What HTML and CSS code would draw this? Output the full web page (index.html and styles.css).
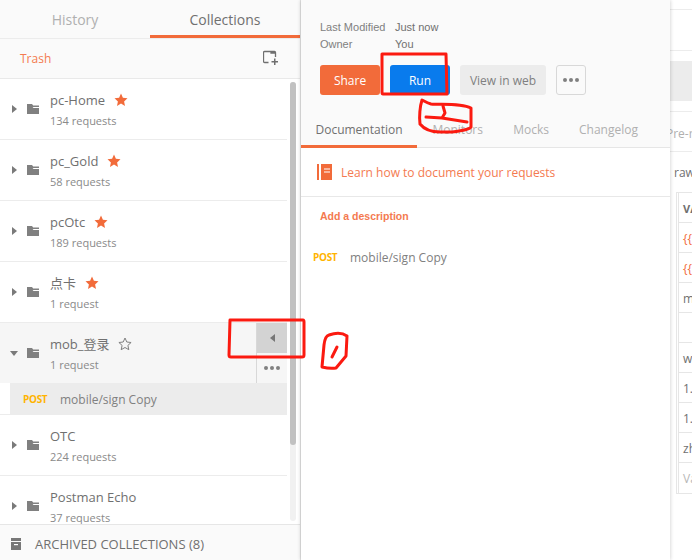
FILE: index.html
```html
<!DOCTYPE html>
<html lang="en">
<head>
<meta charset="utf-8">
<title>Postman</title>
<link rel="stylesheet" href="styles.css">
</head>
<body>
<svg class="defs" width="0" height="0" aria-hidden="true">
  <defs>
    <symbol id="star" viewBox="0 0 14 14"><path d="M7 .6l1.900 4.200 4.600.5-3.400 3.100.9 4.500L7 10.600l-4 2.300.9-4.500L.5 5.300l4.600-.5z"/></symbol>
    <symbol id="folder" viewBox="0 0 12 10"><path d="M0 0h5l1.200 1.500H12V3H6.500L5.600 4H12v6H0z"/></symbol>
  </defs>
</svg>
<div class="app">
  <aside class="sidebar">
    <nav class="side-tabs">
      <div class="side-tab">History</div>
      <div class="side-tab side-tab-on">Collections</div>
    </nav>
    <div class="trash-row">
      <span class="trash">Trash</span>
      <svg class="new-coll" width="16" height="16" viewBox="0 0 16 16"><path d="M5.500 12.500H1.500a1 1 0 0 1-1-1v-9a1 1 0 0 1 1-1h10a1 1 0 0 1 1 1V7M8 1v2h4.500" fill="none" stroke="#6f6f6f" stroke-width="1.300"/><path d="M11 8.500h1.500V11H15v1.500h-2.500V15H11v-2.500H8.500V11H11z" fill="#6f6f6f"/></svg>
    </div>
    <div class="list-wrap">
      <ul class="list">
        <li class="coll">
          <i class="caret"></i><svg class="folder"><use href="#folder"/></svg>
          <div class="coll-text"><div class="coll-name">pc-Home<svg class="star"><use href="#star"/></svg></div><div class="coll-count">134 requests</div></div>
        </li>
        <li class="coll">
          <i class="caret"></i><svg class="folder"><use href="#folder"/></svg>
          <div class="coll-text"><div class="coll-name">pc_Gold<svg class="star"><use href="#star"/></svg></div><div class="coll-count">58 requests</div></div>
        </li>
        <li class="coll">
          <i class="caret"></i><svg class="folder"><use href="#folder"/></svg>
          <div class="coll-text"><div class="coll-name">pcOtc<svg class="star"><use href="#star"/></svg></div><div class="coll-count">189 requests</div></div>
        </li>
        <li class="coll">
          <i class="caret"></i><svg class="folder"><use href="#folder"/></svg>
          <div class="coll-text"><div class="coll-name">点卡<svg class="star"><use href="#star"/></svg></div><div class="coll-count">1 request</div></div>
        </li>
        <li class="coll coll-open">
          <i class="caret caret-down"></i><svg class="folder"><use href="#folder"/></svg>
          <div class="coll-text"><div class="coll-name">mob_登录<svg class="star star-empty" viewBox="0 0 14 14"><path d="M7 1l1.800 4 4.300.5-3.200 2.900.9 4.300L7 10.500l-3.800 2.200.9-4.300L.9 5.500l4.300-.5z"/></svg></div><div class="coll-count">1 request</div></div>
          <div class="coll-actions">
            <div class="collapse-btn"><i class="caret-left"></i></div>
            <div class="more-btn"><b></b><b></b><b></b></div>
          </div>
        </li>
        <li class="req"><span class="post">POST</span><span class="req-name">mobile/sign Copy</span></li>
        <li class="coll">
          <i class="caret"></i><svg class="folder"><use href="#folder"/></svg>
          <div class="coll-text"><div class="coll-name">OTC</div><div class="coll-count">224 requests</div></div>
        </li>
        <li class="coll">
          <i class="caret"></i><svg class="folder"><use href="#folder"/></svg>
          <div class="coll-text"><div class="coll-name">Postman Echo</div><div class="coll-count">37 requests</div></div>
        </li>
      </ul>
      <div class="scroll-track"><div class="scroll-thumb"></div></div>
    </div>
    <footer class="archived">
      <svg width="12" height="12" viewBox="0 0 12 12"><path fill="#777" d="M1 0h10v3H1zM1 4h10v8H1z"/><path fill="#fff" d="M4 6h4v1.200H4z"/></svg>
      <span>ARCHIVED COLLECTIONS (8)</span>
    </footer>
  </aside>

  <main class="panel">
    <header class="panel-head">
      <div class="meta"><span class="meta-key">Last Modified</span><span class="meta-val">Just now</span></div>
      <div class="meta"><span class="meta-key">Owner</span><span class="meta-val">You</span></div>
      <div class="actions">
        <button class="btn btn-share">Share</button>
        <button class="btn btn-run">Run</button>
        <button class="btn btn-web">View in web</button>
        <button class="btn btn-more"><b></b><b></b><b></b></button>
      </div>
      <nav class="panel-tabs">
        <div class="panel-tab panel-tab-on">Documentation</div>
        <div class="panel-tab">Monitors</div>
        <div class="panel-tab">Mocks</div>
        <div class="panel-tab">Changelog</div>
      </nav>
    </header>
    <div class="learn">
      <svg width="15" height="16" viewBox="0 0 15 16"><path fill="#f26b3a" d="M0 0h2v16H0zM4 0h11v16H4z"/><path fill="#fff" d="M7 4.500h6v1H7zM7 7.500h6v1H7z"/></svg>
      <span>Learn how to document your requests</span>
    </div>
    <div class="add-desc">Add a description</div>
    <div class="doc-req"><span class="post">POST</span><span class="req-name">mobile/sign Copy</span></div>
  </main>

  <section class="behind">
    <div class="b-r1"></div>
    <div class="b-r2"></div>
    <div class="b-bar"></div>
    <div class="b-tab">Pre-r</div>
    <div class="b-raw">raw</div>
    <div class="b-table">
      <div class="b-cell b-head">VA</div>
      <div class="b-cell b-var">{{</div>
      <div class="b-cell b-var">{{</div>
      <div class="b-cell">m</div>
      <div class="b-cell"></div>
      <div class="b-cell">w</div>
      <div class="b-cell">1.</div>
      <div class="b-cell">1.</div>
      <div class="b-cell">zh</div>
      <div class="b-cell b-ph">Va</div>
    </div>
  </section>
</div>

<svg class="marks" width="692" height="560" viewBox="0 0 692 560" fill="none" stroke="#fb1a10" stroke-width="3" stroke-linejoin="round" stroke-linecap="round" aria-hidden="true">
  <path d="M230 320H303Q304 320 304 322V355Q304 357 302 357H231Q229 357 229 355Z"/>
  <path d="M382 54H446L447 94H383Q382 94 382 92Z"/>
  <path d="M422 100C420 106 419 117 420 124C424 129 432 132 440 132H452C460 131 470 129 471 127L471 108C460 103 440 105 431 104C427 103 424 101 422 100Z"/>
  <path d="M426 117L442 118L445 113L443 106M442 118L467 122"/>
  <path d="M329 335Q325 336 324 345L322 367Q330 369 336 368L346 356L347 336Q340 331 329 335Z"/>
  <path d="M337 347L332 357"/>
</svg>
</body>
</html>
```

FILE: styles.css
```css
* { box-sizing: border-box; }
html, body { margin: 0; padding: 0; }
body {
  width: 692px;
  height: 560px;
  overflow: hidden;
  position: relative;
  background: #fff;
  font-family: "Open Sans", "Noto Sans CJK SC", sans-serif;
  color: #808080;
}
.defs { position: absolute; }
.app { display: flex; width: 692px; height: 560px; overflow: hidden; }

/* Sidebar */
.sidebar {
  width: 301px;
  flex: none;
  display: flex;
  flex-direction: column;
  background: #fafafa;
  border-right: 1px solid #e4e4e4;
  height: 560px;
}
.side-tabs { display: flex; height: 39px; border-bottom: 1px solid #ececec; flex: none; }
.side-tab { width: 150px; height: 38px; padding-top: 10px; text-align: center; font-size: 14px; line-height: 20px; color: #b0b0b0; }
.side-tab-on { color: #707070; border-bottom: 3px solid #f26b3a; }
.trash-row {
  height: 40px;
  flex: none;
  display: flex;
  align-items: center;
  justify-content: space-between;
  padding: 0 21px 0 20px;
  border-bottom: 1px solid #e9e9e9;
}
.trash { font-size: 12px; color: #f47a50; }
.new-coll { display: block; margin-top: -1px; }
.list-wrap { flex: 1; position: relative; overflow: hidden; background: #fff; }
.list { list-style: none; margin: 0; padding: 0; width: 287px; }
.coll {
  height: 61px;
  display: flex;
  align-items: flex-start;
  position: relative;
  border-bottom: 1px solid #ececec;
  padding-left: 12px;
}
.coll-open { height: 60px; background: #f6f6f6; border-bottom: 0; }
.caret { width: 0; height: 0; border-style: solid; border-width: 4px 0 4px 5px; border-color: transparent transparent transparent #7a7a7a; margin-top: 26px; }
.caret-down { border-width: 5px 4px 0 4px; border-color: #7a7a7a transparent transparent transparent; margin: 28px -1px 0 -2px; }
.folder { width: 12px; height: 10px; fill: #808080; margin: 25px 0 0 10px; flex: none; }
.coll-text { margin-left: 11px; padding-top: 11px; }
.coll-name { display: flex; align-items: center; font-size: 13px; line-height: 20px; height: 20px; color: #707070; }
.coll-count { font-size: 11px; line-height: 16px; margin-top: 3px; color: #8a8a8a; }
.star { width: 14px; height: 14px; margin-left: 9px; fill: #f26b3a; flex: none; }
.star-empty { fill: none; stroke: #808080; stroke-width: 1; margin-left: 8px; }
.coll-actions {
  position: absolute;
  right: 0;
  top: 0;
  width: 31px;
  height: 60px;
  border-left: 1px solid #d8d8d8;
  display: flex;
  flex-direction: column;
}
.collapse-btn { height: 30px; background: #d3d3d3; display: flex; align-items: center; justify-content: center; }
.caret-left { width: 0; height: 0; border-style: solid; border-width: 4px 5px 4px 0; border-color: transparent #777 transparent transparent; }
.more-btn { flex: 1; display: flex; align-items: center; justify-content: center; gap: 2px; }
.more-btn b, .btn-more b { width: 4px; height: 4px; border-radius: 50%; background: #808080; display: block; }
.req {
  height: 32px;
  margin-left: 10px;
  background: #ececec;
  display: flex;
  align-items: center;
  position: relative;
  padding-left: 13px;
}
.req::after { content: ""; position: absolute; left: -10px; right: 0; bottom: 0; border-bottom: 1px solid #ececec; }
.post { font-size: 10px; font-weight: 700; letter-spacing: -.3px; color: #ffb400; width: 37px; flex: none; margin-top: -1px; }
.req-name { font-size: 12px; color: #808080; }
.scroll-track { position: absolute; left: 290px; top: 3px; width: 6px; bottom: 3px; background: #f1f1f1; border-radius: 3px; }
.scroll-thumb { height: 363px; background: #c1c1c1; border-radius: 3px; }
.archived {
  height: 36px;
  flex: none;
  display: flex;
  align-items: center;
  padding: 3px 0 0 10px;
  gap: 13px;
  font-size: 13px;
  color: #707070;
  background: #fafafa;
  border-top: 1px solid #e6e6e6;
}

/* Main panel */
.panel {
  width: 369px;
  flex: none;
  height: 560px;
  background: #fff;
  position: relative;
  z-index: 1;
  box-shadow: 0 0 4px rgba(0, 0, 0, .22);
}
.panel-head { height: 148px; background: #fafafa; padding: 18px 0 0 19px; border-bottom: 1px solid #e6e6e6; position: relative; }
.meta { display: flex; height: 17px; align-items: center; font-family: "Liberation Sans", Arial, sans-serif; font-size: 11px; }
.meta-key { width: 75px; color: #808080; }
.meta-val { color: #707070; }
.actions { display: flex; gap: 10px; margin-top: 13px; }
.btn { font-family: "Open Sans", sans-serif; font-size: 12px; height: 30px; border: 0; border-radius: 3px; padding: 0; display: flex; align-items: center; justify-content: center; }
.btn-share { width: 60px; background: #f26b3a; color: #fff; }
.btn-run { width: 60px; background: #097bed; color: #fff; }
.btn-web { width: 86px; background: #ececec; color: #808080; }
.btn-more { width: 30px; background: #fafafa; border: 1px solid #d8d8d8; gap: 2px; }
.panel-tabs { display: flex; position: absolute; left: 0; bottom: -1px; height: 36px; }
.panel-tab { font-size: 12px; color: #b0b0b0; padding: 9px 0 0; text-align: center; }
.panel-tab:nth-child(1) { width: 116px; color: #707070; border-bottom: 3px solid #f26b3a; height: 36px; }
.panel-tab:nth-child(2) { width: 66px; text-align: right; }
.panel-tab:nth-child(3) { width: 66px; text-align: right; }
.panel-tab:nth-child(4) { width: 89px; text-align: right; }
.learn { height: 49px; display: flex; align-items: center; gap: 9px; padding-left: 16px; border-bottom: 1px solid #e8e8e8; font-size: 12px; color: #f47a50; }
.add-desc { font-family: "Liberation Sans", Arial, sans-serif; font-size: 10.500px; font-weight: 700; color: #f47a50; padding: 13px 0 0 19px; height: 33px; }
.doc-req { display: flex; align-items: center; height: 20px; margin-top: 17px; padding-left: 12px; }

/* Content behind the panel */
.behind { flex: 1; min-width: 0; height: 560px; overflow: hidden; font-size: 12px; color: #707070; background: #fff; }
.b-r1 { height: 10px; border-bottom: 1px solid #ececec; }
.b-r2 { height: 41px; border-bottom: 1px solid #ececec; }
.b-bar { height: 40px; margin-top: 10px; background: #ececec; }
.b-tab { height: 41px; margin-top: 10px; border-top: 1px solid #ececec; border-bottom: 1px solid #ececec; padding-top: 13px; text-indent: -4px; color: #b0b0b0; white-space: nowrap; }
.b-raw { height: 40px; padding: 12px 0 0 4px; }
.b-table { margin-left: 6px; border-left: 1px solid #e6e6e6; border-bottom: 1px solid #e6e6e6; border-top: 1px solid #e6e6e6; padding-left: 1px; }
.b-cell { height: 30px; padding: 6px 0 0 4px; border-left: 1px solid #e6e6e6; border-bottom: 1px solid #e6e6e6; white-space: nowrap; line-height: 20px; }
.b-cell:last-child { border-bottom: 0; }
.b-head { font-weight: 700; font-size: 11px; }
.b-var { color: #f26b3a; }
.b-ph { color: #b8b8b8; }

/* Hand-drawn annotations over the screenshot */
.marks { position: absolute; left: 0; top: 0; z-index: 5; pointer-events: none; }
```
